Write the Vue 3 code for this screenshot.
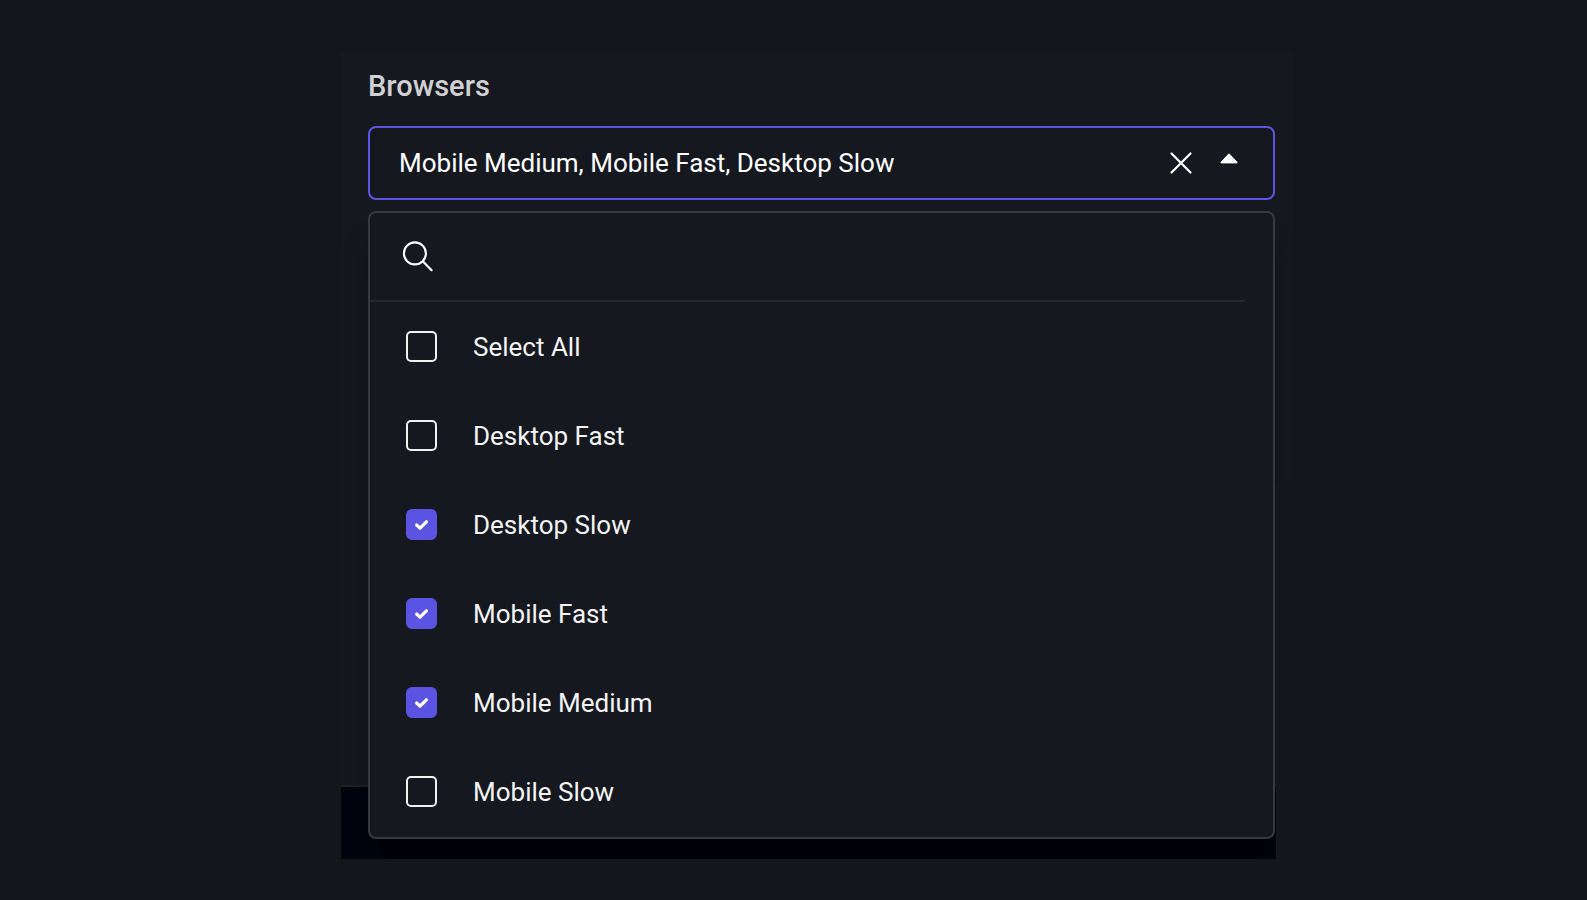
<script setup>
import { computed, ref } from 'vue'

const options = ['Desktop Fast', 'Desktop Slow', 'Mobile Fast', 'Mobile Medium', 'Mobile Slow']
const selected = ref(['Mobile Medium', 'Mobile Fast', 'Desktop Slow'])
const query = ref('')
const open = ref(true)

const visible = computed(() =>
  options.filter((o) => o.toLowerCase().includes(query.value.toLowerCase()))
)
const allSelected = computed({
  get: () => selected.value.length === options.length,
  set: (on) => {
    selected.value = on ? [...options] : []
  },
})
</script>

<template>
  <main class="page">
    <section class="stage">
      <div class="backdrop">
        <div class="backdrop-body"></div>
        <div class="backdrop-bar"></div>
      </div>

      <div class="content">
        <h2 id="browsers-label" class="label">Browsers</h2>

        <div class="field">
          <button
            class="value"
            type="button"
            aria-labelledby="browsers-label browsers-value"
            :aria-expanded="open"
            @click="open = !open"
          >
            <span id="browsers-value">{{ selected.join(', ') }}</span>
          </button>
          <button class="icon-button" type="button" aria-label="Clear selection" @click="selected = []">
            <svg width="24" height="24" viewBox="0 0 24 24">
              <path d="M2.5 2.5 21.5 21.5M21.5 2.5 2.5 21.5" fill="none" stroke="#fff" stroke-width="2.2" stroke-linecap="round" />
            </svg>
          </button>
          <button class="icon-button" type="button" aria-label="Toggle list" @click="open = !open">
            <svg width="18" height="20" viewBox="0 0 18 20">
              <path d="M9 .8 17 9V9.9H1V9Z" fill="#fff" stroke="#fff" stroke-width="1" stroke-linejoin="round" />
            </svg>
          </button>
        </div>

        <div v-if="open" class="dropdown">
          <div class="search">
            <svg width="32" height="32" viewBox="0 0 32 32">
              <circle cx="12.9" cy="12.4" r="11" fill="none" stroke="#fff" stroke-width="2.1" />
              <path d="M20.8 20.3 29.6 29.2" fill="none" stroke="#fff" stroke-width="2.2" stroke-linecap="round" />
            </svg>
            <input v-model="query" class="search-input" type="text" aria-label="Search browsers" />
          </div>

          <label class="option">
            <span class="box">
              <input v-model="allSelected" type="checkbox" />
              <svg class="tick" width="31" height="31" viewBox="0 0 31 31">
                <path d="M10.6 16 14 19.2 20.4 12.8" />
              </svg>
            </span>
            <span>Select All</span>
          </label>
          <label v-for="name in visible" :key="name" class="option">
            <span class="box">
              <input v-model="selected" type="checkbox" :value="name" />
              <svg class="tick" width="31" height="31" viewBox="0 0 31 31">
                <path d="M10.6 16 14 19.2 20.4 12.8" />
              </svg>
            </span>
            <span>{{ name }}</span>
          </label>
        </div>
      </div>
    </section>
  </main>
</template>

<style>
body {
  margin: 0;
  background: #13171b;
}
</style>

<style scoped>
.page {
  box-sizing: border-box;
  min-height: 100vh;
  padding: 51px 0 41px;
  display: grid;
  grid-template-columns: 341fr 952fr 294fr;
  align-items: start;
  font-family: Roboto, 'Liberation Sans', sans-serif;
  font-size: 26px;
  color: #fff;
}

/* The panel steps in by 17px on its right side, and trims the list's shadow with it. */
.stage {
  grid-column: 2;
  display: grid;
  clip-path: polygon(
    0 0,
    100% 0,
    100% 433px,
    calc(100% - 17px) 433px,
    calc(100% - 17px) 100%,
    0 100%
  );
}

.backdrop,
.content {
  grid-area: 1 / 1;
  min-width: 0;
}

.backdrop {
  display: flex;
  flex-direction: column;
}

.backdrop-body {
  flex: 1;
  background: #15181f;
  border-bottom: 2px solid #1f2023;
}

.backdrop-bar {
  height: 72px;
  background: #01040e;
}

.content {
  padding: 17px 18px 20px 27px;
}

.label {
  margin: 0 0 22px;
  font-size: 29px;
  line-height: 36px;
  font-weight: 500;
  color: #d0d1d3;
}

.field {
  box-sizing: border-box;
  height: 74px;
  padding-right: 35px;
  display: flex;
  align-items: center;
  gap: 27px;
  border: 2px solid #5d54e3;
  border-radius: 8px;
  background: #15181f;
}

button {
  padding: 0;
  border: 0;
  background: none;
  color: inherit;
  font: inherit;
  cursor: pointer;
}

.value {
  flex: 1;
  min-width: 0;
  height: 100%;
  padding-left: 29px;
  text-align: left;
  white-space: nowrap;
  overflow: hidden;
  text-overflow: ellipsis;
}

.icon-button {
  display: flex;
}

.dropdown {
  position: relative;
  margin-top: 11px;
  padding-bottom: 1px;
  border: 2px solid #38393c;
  border-radius: 8px;
  background: #15181f;
  box-shadow: 0 32px 28px -4px rgba(0, 0, 0, 0.4);
}

.search {
  box-sizing: border-box;
  height: 89px;
  margin-right: 28px;
  padding-left: 32px;
  display: flex;
  align-items: center;
  gap: 16px;
  border-bottom: 2px solid #26272a;
}

.search-input {
  flex: 1;
  min-width: 0;
  height: 48px;
  padding: 0;
  border: 0;
  outline: 0;
  background: none;
  color: inherit;
  font: inherit;
}

.option {
  height: 89px;
  padding-left: 36px;
  display: flex;
  align-items: center;
  gap: 36px;
  color: #f4f4f5;
  cursor: pointer;
}

.box {
  display: grid;
}

.box input,
.tick {
  grid-area: 1 / 1;
}

.box input {
  appearance: none;
  box-sizing: border-box;
  width: 31px;
  height: 31px;
  margin: 0;
  border: 2px solid #f1f1f2;
  border-radius: 5px;
  cursor: pointer;
}

.box input:checked {
  border-color: #5b54e2;
  border-radius: 6px;
  background: #5b54e2;
}

.tick {
  visibility: hidden;
  pointer-events: none;
  fill: none;
  stroke: #fff;
  stroke-width: 3.2;
  stroke-linecap: round;
  stroke-linejoin: round;
}

.box input:checked + .tick {
  visibility: visible;
}
</style>
